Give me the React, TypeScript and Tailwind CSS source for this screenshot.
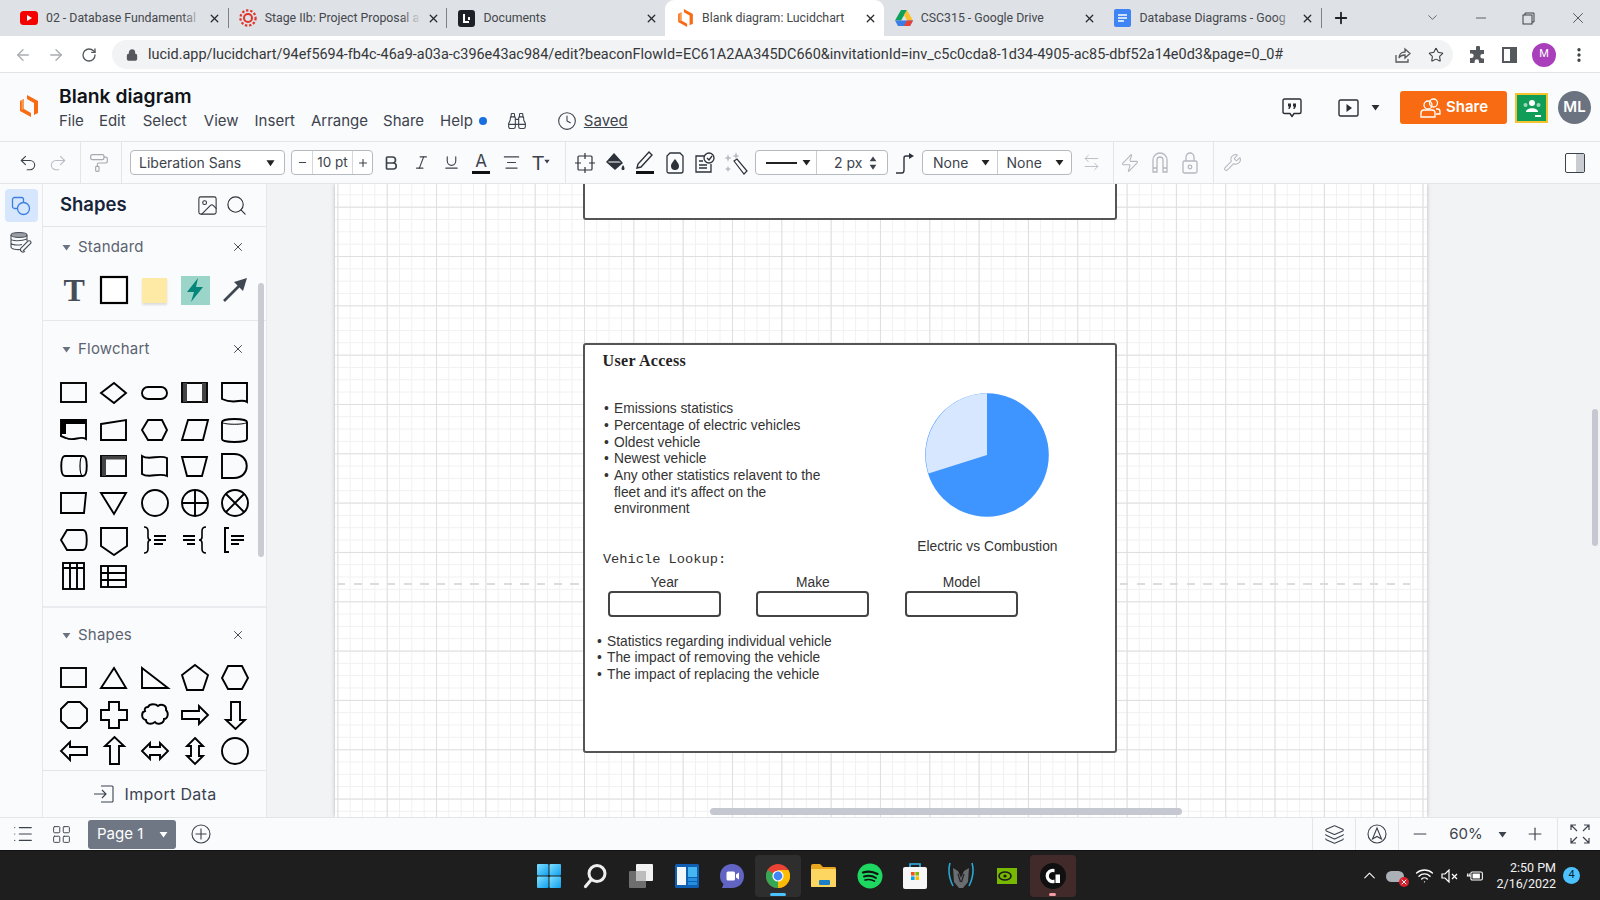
import React from 'react';
import {
  ArrowLeft, ArrowRight, RotateCw, Lock, Star, X, Plus, Minus, ChevronDown, ChevronUp, MoreVertical,
  Undo2, Redo2, PaintRoller, Bold, Italic, Underline, AlignCenter, Zap, Wrench, Search, Image as ImageIcon,
  List, LayoutGrid, Layers, Clock, Binoculars, Wifi, ArrowLeftRight,
} from 'lucide-react';

const Lucid = ({ className = '' }: { className?: string }) => (
  <svg viewBox="0 0 18 22" className={className}>
    <path d="M7 0 L18 6 V18 L14 20 V8 L7 4Z" fill="#f96b13" />
    <path d="M0 6 L4 4 V14 L11 18 V22 L0 16Z" fill="#f96b13" />
    <path d="M0 6 L4 4 V14 L1.6 15 V6.5Z" fill="#fb9b52" />
  </svg>
);

const Caret = ({ className = '' }: { className?: string }) => (
  <svg viewBox="0 0 10 8" className={className}><path d="M0.5 1h9L5 7.5z" fill="currentColor" /></svg>
);

function Tab({ icon, title, active, sep, fade }: { icon: React.ReactNode; title: string; active?: boolean; sep?: boolean; fade?: boolean }) {
  return (
    <div className={`relative flex h-full w-[218.7px] shrink-0 items-center pl-[11px] ${active ? 'rounded-t-[9px] bg-white' : ''}`}>
      <div className="flex w-[18px] shrink-0 items-center justify-center">{icon}</div>
      <div className="relative ml-[8px] w-[156px] overflow-hidden whitespace-nowrap text-[12.3px] text-[#44474b]">
        {title}
        {fade && <div className="absolute inset-y-0 right-0 w-[20px] bg-gradient-to-r from-transparent to-[#dee1e6]" />}
      </div>
      <X size={13} strokeWidth={2.4} className="ml-[6px] shrink-0 text-[#27292b]" />
      {sep && <div className="absolute right-[-1px] top-[8px] h-[20px] w-px bg-[#7d8085]" />}
    </div>
  );
}

const Ic = ({ children, w = 'w-[30px]' }: { children: React.ReactNode; w?: string }) => (
  <div className={`flex shrink-0 items-center justify-center ${w}`}>{children}</div>
);

const Sep = ({ className = '' }: { className?: string }) => <div className={`h-full w-px shrink-0 bg-[#e3e5e9] ${className}`} />;

function ShapeGrid({ children }: { children: React.ReactNode }) {
  return <div className="ml-[11px] grid w-[201.5px] grid-cols-5 auto-rows-[36.6px]">{children}</div>;
}

function Sh({ children }: { children: React.ReactNode }) {
  return (
    <div className="flex items-center justify-center">
      <svg width="32" height="32" viewBox="0 0 32 32" fill="none" stroke="#000" strokeWidth="1.9">{children}</svg>
    </div>
  );
}

function SectionHead({ title }: { title: string }) {
  return (
    <div className="flex h-[20px] items-center pl-[19px] pr-[21px]">
      <Caret className="h-[7px] w-[9px] text-[#6b7280]" />
      <span className="ml-[7px] flex-1 text-[15px] tracking-[0.2px] text-[#5c6370]">{title}</span>
      <X size={14} strokeWidth={1.6} className="text-[#3a3f47]" />
    </div>
  );
}

const flowchart = [
  <rect key="a" x="3" y="6" width="25" height="19" />,
  <path key="b" d="M16 6 L28 16 L16 26 L3 16Z" />,
  <rect key="c" x="3" y="10" width="25" height="12" rx="6" />,
  <g key="d"><rect x="3" y="6" width="25" height="19" /><rect x="4" y="6" width="4" height="19" fill="#444" stroke="none" /><rect x="23" y="6" width="4" height="19" fill="#444" stroke="none" /></g>,
  <path key="e" d="M3 6 H28 V25 C22 21 16 28 3 22Z" />,
  <g key="f"><path d="M3 6 H28 V25 C22 21 16 28 8 24 L3 22Z" /><path d="M3 6 H27 V10 H8 V20 L3 20Z" fill="#000" stroke="none" /></g>,
  <path key="g" d="M3 10 L28 6 V26 H3Z" />,
  <path key="h" d="M9 6 H23 L28 16 L23 26 H9 L3 16Z" />,
  <path key="i" d="M9 6 H29 L24 26 H3Z" />,
  <g key="j"><path d="M3 8 C3 4 28 4 28 8 V25 C28 29 3 29 3 25Z" /><path d="M3 8 C3 11 28 11 28 8" strokeWidth="1" /></g>,
  <g key="k"><path d="M7 6 H25 C30 6 30 26 25 26 H7 C2 26 2 6 7 6Z" /><path d="M25 6 C21 6 21 26 25 26" strokeWidth="1.2" /></g>,
  <g key="l"><rect x="3" y="6" width="25" height="20" /><rect x="4" y="6" width="4" height="20" fill="#444" stroke="none" /><rect x="4" y="6" width="24" height="3.5" fill="#444" stroke="none" /></g>,
  <path key="m" d="M3 6 C10 11 20 4 28 8 V26 C20 22 10 29 3 24Z" />,
  <path key="n" d="M3 7 H28 L23 26 H8Z" />,
  <path key="o" d="M3 4 H15 C32 4 32 28 15 28 H3Z" />,
  <path key="p" d="M3 6 H28 L26 26 H3Z" />,
  <path key="q" d="M3 6 H28 L16 27Z" />,
  <circle key="r" cx="16" cy="16" r="13" />,
  <g key="s"><circle cx="16" cy="16" r="13" /><path d="M3 16H29M16 3V29" /></g>,
  <g key="t"><circle cx="16" cy="16" r="13" /><path d="M7 7L25 25M25 7L7 25" /></g>,
  <path key="u" d="M9 6 H25 C30 6 30 26 25 26 H9 L3 16Z" />,
  <path key="v" d="M3 4 H29 V22 L16 31 L3 22Z" />,
  <g key="w"><path d="M5 3 Q9 3 9 7 V13 Q9 16 12 16 Q9 16 9 19 V25 Q9 29 5 29" strokeWidth="1.6" /><path d="M15 12H27M15 16H27M15 20H24" strokeWidth="2" /></g>,
  <g key="x"><path d="M27 3 Q23 3 23 7 V13 Q23 16 20 16 Q23 16 23 19 V25 Q23 29 27 29" strokeWidth="1.6" /><path d="M4 12H16M4 16H16M8 20H16" strokeWidth="2" /></g>,
  <g key="y"><path d="M10 4 H6 V28 H10" strokeWidth="2" /><path d="M12 12H25M12 16H25M12 20H20" strokeWidth="2" /></g>,
  <g key="z"><rect x="5" y="3" width="21" height="26" /><path d="M5 8H26M12 3V29M19 3V29" /></g>,
  <g key="aa"><rect x="3" y="6" width="25" height="21" /><path d="M3 13H28M3 20H28M10 6V27" /></g>,
];

const shapesList = [
  <rect key="a" x="3" y="6" width="25" height="19" />,
  <path key="b" d="M16 6 L28 26 H3Z" />,
  <path key="c" d="M3 6 L29 26 H3Z" />,
  <path key="d" d="M16 3 L29 13 L24 28 H8 L3 13Z" />,
  <path key="e" d="M9 4 H23 L29 16 L23 27 H9 L3 16Z" />,
  <path key="f" d="M10 3 H22 L29 10 V22 L22 29 H10 L3 22 V10Z" />,
  <path key="g" d="M11 3 H21 V11 H29 V21 H21 V29 H11 V21 H3 V11 H11Z" />,
  <path key="h" d="M9 8 C11 4 17 5 19 7 C23 4 28 7 27 11 C30 14 29 20 25 20 C25 25 18 26 16 23 C12 26 7 25 7 21 C2 20 2 13 6 12 C5 9 7 8 9 8Z" />,
  <path key="i" d="M3 12 H20 V7 L29 16 L20 25 V20 H3Z" />,
  <path key="j" d="M12 3 H21 V21 H26 L16.5 30 L7 21 H12Z" />,
  <path key="k" d="M29 12 H12 V7 L3 16 L12 25 V20 H29Z" />,
  <path key="l" d="M12 29 H21 V11 H26 L16.5 2 L7 11 H12Z" />,
  <path key="m" d="M3 16 L11 8 V12 H21 V8 L29 16 L21 24 V20 H11 V24Z" />,
  <path key="n" d="M16 3 L24 11 H20 V21 H24 L16 29 L8 21 H12 V11 H8Z" />,
  <circle key="o" cx="16" cy="16" r="13" />,
];

function Windows() {
  return (
    <svg width="26" height="26" viewBox="0 0 26 26">
      <defs>
        <linearGradient id="w1" x1="0" y1="0" x2="1" y2="1"><stop offset="0" stopColor="#7fe0ff" /><stop offset="1" stopColor="#0f9ff0" /></linearGradient>
      </defs>
      <rect x="1" y="1" width="11.5" height="11.5" rx="1" fill="url(#w1)" />
      <rect x="13.5" y="1" width="11.5" height="11.5" rx="1" fill="url(#w1)" />
      <rect x="1" y="13.5" width="11.5" height="11.5" rx="1" fill="url(#w1)" />
      <rect x="13.5" y="13.5" width="11.5" height="11.5" rx="1" fill="url(#w1)" />
    </svg>
  );
}

const taskIcons: React.ReactNode[] = [
  <Windows key="w" />,
  <svg key="s" width="26" height="26" viewBox="0 0 26 26" fill="none"><circle cx="15" cy="10.5" r="8" stroke="#eee" strokeWidth="3" /><path d="M9 17 L3.5 23.5" stroke="#eee" strokeWidth="3.2" strokeLinecap="round" /></svg>,
  <svg key="t" width="26" height="26" viewBox="0 0 26 26"><rect x="8" y="1" width="17" height="17" rx="1" fill="#f2f2f2" /><rect x="1" y="8" width="17" height="17" rx="1" fill="#777" fillOpacity="0.9" /><rect x="8" y="8" width="10" height="10" fill="#bdbdbd" /></svg>,
  <svg key="wd" width="26" height="26" viewBox="0 0 26 26"><rect x="1" y="1" width="24" height="24" rx="1.5" fill="#0f5fb4" /><rect x="3" y="4" width="9" height="18" fill="#f4f7fa" /><rect x="14" y="4" width="9" height="10" fill="#45b6f2" /><rect x="14" y="15" width="9" height="3" fill="#2590dd" /><rect x="14" y="19" width="9" height="3" fill="#2590dd" /></svg>,
  <svg key="c" width="26" height="26" viewBox="0 0 26 26"><path d="M13 1 C20 1 25 6 25 13 C25 20 20 25 13 25 H3 L4.5 21 C2 19 1 16 1 13 C1 6 6 1 13 1Z" fill="#6264c4" /><rect x="7.5" y="8.5" width="8.5" height="9" rx="1.5" fill="#fff" /><path d="M17 11.5 L20 9.5 V16.5 L17 14.5Z" fill="#fff" /></svg>,
  <svg key="ch" width="24" height="24" viewBox="0 0 24 24"><circle cx="12" cy="12" r="12" fill="#ea4335" /><path d="M12 12 L1.6 6 A12 12 0 0 0 12 24 L18 13.5Z" fill="#34a853" /><path d="M12 12 L12 24 A12 12 0 0 0 22.4 6 L12 6Z" fill="#fbbc04" /><circle cx="12" cy="12" r="5.6" fill="#fff" /><circle cx="12" cy="12" r="4.4" fill="#4285f4" /></svg>,
  <svg key="f" width="27" height="25" viewBox="0 0 27 25"><path d="M1 3 Q1 1 3 1 H10 L13 4 H25 Q26 4 26 6 V23 Q26 24 25 24 H2 Q1 24 1 23Z" fill="#e8a71e" /><rect x="1" y="6" width="25" height="18" rx="1" fill="#fdd662" /><rect x="9" y="17" width="11" height="5" rx="1" fill="#1c80c8" /></svg>,
  <svg key="sp" width="26" height="26" viewBox="0 0 26 26" fill="none"><circle cx="13" cy="13" r="12.5" fill="#1ed760" /><path d="M6 9.5 C11 8 16 8.5 20.5 11" stroke="#111" strokeWidth="2.2" strokeLinecap="round" /><path d="M7 13.5 C11 12.3 15.5 12.8 19 15" stroke="#111" strokeWidth="1.9" strokeLinecap="round" /><path d="M8 17 C11.5 16 15 16.5 17.5 18.2" stroke="#111" strokeWidth="1.6" strokeLinecap="round" /></svg>,
  <svg key="st" width="26" height="28" viewBox="0 0 26 28" fill="none"><path d="M8 6 V2 H18 V6" stroke="#33b4ee" strokeWidth="1.6" /><rect x="1" y="5" width="24" height="22" rx="2" fill="#f6f6f6" /><rect x="9" y="10" width="3.6" height="3.6" fill="#f25022" /><rect x="13.4" y="10" width="3.6" height="3.6" fill="#7fba00" /><rect x="9" y="14.4" width="3.6" height="3.6" fill="#00a4ef" /><rect x="13.4" y="14.4" width="3.6" height="3.6" fill="#ffb900" /></svg>,
  <svg key="pr" width="26" height="28" viewBox="0 0 26 28" fill="none"><path d="M2 1 C0 8 1 16 5 24 M24 1 C26 8 25 16 21 24" stroke="#2aa5cf" strokeWidth="1.6" /><path d="M5 6 L10 9 L13 16 L16 9 L21 6 L20 20 L15 26 H11 L6 20Z" fill="#6a6d71" /><path d="M10 12 L12.5 20 M16 12 L13.5 20" stroke="#222" strokeWidth="1.2" /></svg>,
  <svg key="nv" width="20" height="16" viewBox="0 0 20 16"><rect x="0" y="0" width="20" height="16" fill="#76b900" /><ellipse cx="8" cy="8" rx="6" ry="4" fill="none" stroke="#1c1c1c" strokeWidth="1.6" /><circle cx="8" cy="8" r="1.6" fill="#1c1c1c" /></svg>,
  <svg key="lg" width="26" height="26" viewBox="0 0 26 26" fill="none"><circle cx="13" cy="13" r="13" fill="#101010" /><path d="M14.5 6 A7.2 7.2 0 1 0 14.5 20 V16.6 A4 4 0 1 1 14.5 9.3Z" fill="#fff" /><path d="M15.5 11.5 H20 V20 H15.5Z" fill="#fff" /></svg>,
];

export default function App() {
  return (
    <div className="flex h-[900px] w-[1600px] flex-col overflow-hidden bg-white font-[Inter,sans-serif] text-[#1f2328]">
      {/* Browser tabs */}
      <div className="flex h-[36px] shrink-0 items-end bg-[#dee1e6] pl-[9px] font-[Roboto,sans-serif]">
        <Tab fade sep title="02 - Database Fundamental" icon={<svg width="18" height="14" viewBox="0 0 18 14"><rect width="18" height="14" rx="3.5" fill="#f40000" /><path d="M7 4 L12 7 L7 10Z" fill="#fff" /></svg>} />
        <Tab fade sep title="Stage IIb: Project Proposal a" icon={<svg width="18" height="18" viewBox="0 0 18 18" fill="none"><circle cx="9" cy="9" r="4" stroke="#e0352b" strokeWidth="2" /><circle cx="9" cy="9" r="7.6" stroke="#e0352b" strokeWidth="2.2" strokeDasharray="2.4 1.8" /></svg>} />
        <Tab title="Documents" icon={<svg width="17" height="17" viewBox="0 0 17 17"><rect width="17" height="17" rx="3" fill="#1d2026" /><path d="M6 4 V12 H11 M11 7 V10" stroke="#fff" strokeWidth="2" fill="none" /></svg>} />
        <Tab active title="Blank diagram: Lucidchart" icon={<Lucid className="h-[18px] w-[15px]" />} />
        <Tab title="CSC315 - Google Drive" icon={<svg width="18" height="16" viewBox="0 0 18 16"><path d="M6 0 H12 L6 10.5 H0Z" fill="#0fa05c" /><path d="M12 0 L18 10.5 H12 L9 5Z" fill="#fbc02d" /><path d="M0 10.5 H18 L15 16 H3Z" fill="#3b7de8" /><path d="M12 10.5 H18 L15 16 H9Z" fill="#e94235" /></svg>} />
        <Tab fade sep title="Database Diagrams - Goog" icon={<svg width="17" height="18" viewBox="0 0 17 18"><rect width="17" height="18" rx="2" fill="#3f84f4" /><path d="M4 6H13M4 9H13M4 12H10" stroke="#fff" strokeWidth="1.6" /></svg>} />
        <div className="ml-[11px] flex h-full items-center"><Plus size={18} strokeWidth={2.4} className="text-[#1f2124]" /></div>
        <div className="ml-[75px] flex h-full items-center gap-[33px] text-[#3c4043]">
          <ChevronDown size={15} strokeWidth={1.2} className="-translate-y-[1px]" />
          <Minus size={16} strokeWidth={1.2} />
          <svg width="13" height="13" viewBox="0 0 13 13" fill="none" stroke="#3c4043"><rect x="1" y="3" width="9" height="9" /><path d="M3 3V1H12V10H10" /></svg>
          <X size={18} strokeWidth={1.1} className="translate-x-[1px]" />
        </div>
      </div>

      {/* Address bar */}
      <div className="flex h-[37px] shrink-0 items-center border-b border-[#e3e4e7] bg-white pt-[1px] font-[Roboto,sans-serif]">
        <div className="flex w-[112px] shrink-0 items-center pl-[14px] text-[#a9acb0]">
          <ArrowLeft size={18} strokeWidth={1.8} />
          <ArrowRight size={18} strokeWidth={1.8} className="ml-[15px]" />
          <RotateCw size={16} strokeWidth={2} className="ml-[16px] text-[#55585c]" />
        </div>
        <div className="flex h-[29px] w-[1341px] shrink-0 items-center rounded-full bg-[#f1f3f4] pl-[14px] pr-[9px]">
          <Lock size={12} strokeWidth={2.6} fill="#55585c" className="shrink-0 text-[#55585c]" />
          <div className="ml-[10px] flex-1 whitespace-nowrap text-[14.45px] text-[#35373a]">lucid.app/lucidchart/94ef5694-fb4c-46a9-a03a-c396e43ac984/edit?beaconFlowId=EC61A2AA345DC660&amp;invitationId=inv_c5c0cda8-1d34-4905-ac85-dbf52a14e0d3&amp;page=0_0#</div>
          <svg width="18" height="18" viewBox="0 0 18 18" fill="none" stroke="#55585c" strokeWidth="1.3" className="shrink-0"><path d="M2 9 V16 H14 V13" /><path d="M5 12 C5 8 8 6 11 6 V3 L16 7.5 L11 12 V9 C8 9 6 10 5 12Z" /></svg>
          <Star size={16} strokeWidth={1.6} className="ml-[16px] shrink-0 text-[#3c3f42]" />
        </div>
        <div className="ml-[16px] flex items-center gap-[15px] text-[#55585c]">
          <svg width="18" height="18" viewBox="0 0 18 18" fill="#55585c"><path d="M7 1.5 a2 2 0 0 1 4 0 V4 H15 V8 h-1.5 a2.2 2.2 0 0 0 0 4.4 H15 V17 H10 v-1.5 a2.2 2.2 0 0 0 -4.4 0 V17 H1 V12 h1.5 a2.2 2.2 0 0 0 0 -4.4 H1 V4 H7Z" /></svg>
          <svg width="15" height="16" viewBox="0 0 15 16" fill="none"><rect x="1" y="1" width="13" height="14" stroke="#55585c" strokeWidth="2" /><rect x="8" y="1" width="6" height="14" fill="#55585c" /></svg>
          <div className="flex h-[24px] w-[24px] items-center justify-center rounded-full bg-[#a93fbb] text-[11px] text-white">M</div>
          <MoreVertical size={18} strokeWidth={2.4} className="-ml-[1px] text-[#3c4043]" />
        </div>
      </div>

      {/* Lucid header */}
      <div className="flex h-[68px] shrink-0 items-center bg-[#fafbfd]">
        <Lucid className="ml-[20px] mt-[-2px] h-[22px] w-[18px] shrink-0" />
        <div className="ml-[21px] flex flex-col pt-[1px]">
          <div className="text-[19.3px] font-semibold leading-[24px] text-[#111418]">Blank diagram</div>
          <div className="mt-[3px] flex h-[20px] items-center text-[15px] text-[#3d434c]">
            <span>File</span>
            <span className="ml-[15px]">Edit</span>
            <span className="ml-[17px]">Select</span>
            <span className="ml-[17px]">View</span>
            <span className="ml-[16px]">Insert</span>
            <span className="ml-[16px]">Arrange</span>
            <span className="ml-[15px]">Share</span>
            <span className="ml-[16px]">Help</span>
            <span className="ml-[6px] h-[8px] w-[8px] rounded-full bg-[#1a6fe0]" />
            <Binoculars size={20} strokeWidth={1.3} className="ml-[20px] text-[#3d434c]" />
            <Clock size={20} strokeWidth={1.3} className="ml-[30px] text-[#3d434c]" />
            <span className="ml-[7px] underline">Saved</span>
          </div>
        </div>
        <div className="ml-auto flex items-center pt-[1px]">
          <svg width="20" height="20" viewBox="0 0 20 20" fill="none"><path d="M2.5 1 H17.5 Q19 1 19 2.5 V14 Q19 15.5 17.5 15.5 H12 L10 18.5 L8 15.5 H2.5 Q1 15.5 1 14 V2.5 Q1 1 2.5 1Z" stroke="#2a2e34" strokeWidth="1.4" strokeLinejoin="round" /><path d="M6 5.5 H9 V8.5 L7.5 11 H6.3 L7 8.5 H6Z M11 5.5 H14 V8.5 L12.5 11 H11.3 L12 8.5 H11Z" fill="#2a2e34" /></svg>
          <svg width="21" height="18" viewBox="0 0 21 18" fill="none" className="ml-[36px]"><rect x="1" y="1" width="19" height="16" rx="1.5" stroke="#2a2e34" strokeWidth="1.4" /><path d="M8.5 5 L14 9 L8.5 13Z" fill="#2a2e34" /></svg>
          <Caret className="ml-[12px] h-[7px] w-[9px] text-[#2a2e34]" />
          <div className="ml-[20px] flex h-[33px] w-[107px] items-center justify-center gap-[5px] rounded-[3px] bg-[#f96b13] text-[15px] font-semibold text-white">
            <svg width="22" height="22" viewBox="0 0 22 22" fill="none" stroke="#fff" strokeWidth="1.3"><circle cx="9" cy="8" r="4" /><circle cx="14.5" cy="6" r="4" /><path d="M2 20 V16 Q2 13 5 13 H13 Q16 13 16 16 V20Z" /><path d="M17 12 H19 Q21 12 21 15 V17 H17" /></svg>
            Share
          </div>
          <div className="ml-[8px] flex h-[30px] w-[33px] items-center justify-center border-[2px] border-[#f4c430] bg-[#0f9d58]">
            <svg width="24" height="22" viewBox="0 0 24 22" fill="#fff"><circle cx="12" cy="6" r="3" /><circle cx="5.5" cy="8" r="2" fillOpacity="0.6" /><circle cx="18.5" cy="8" r="2" fillOpacity="0.6" /><path d="M6 15 C6 10 18 10 18 15Z" /><rect x="15" y="18" width="6" height="2" /></svg>
          </div>
          <div className="ml-[10px] mr-[9px] flex h-[33px] w-[33px] items-center justify-center rounded-full bg-[#6b7280] text-[15px] font-semibold text-white">ML</div>
        </div>
      </div>

      {/* Toolbar */}
      <div className="flex h-[43px] shrink-0 items-center border-y border-[#e3e5e9] bg-[#fafbfd] pl-[13px] text-[#3d434c]">
        <Ic><Undo2 size={20} strokeWidth={1.3} /></Ic>
        <Ic><Redo2 size={20} strokeWidth={1.3} className="text-[#b9bdc4]" /></Ic>
        <Sep className="ml-[7px]" />
        <Ic w="w-[36px]"><PaintRoller size={20} strokeWidth={1.4} className="text-[#a5a9b0]" /></Ic>
        <Sep className="ml-[4px]" />
        <div className="ml-[8px] flex h-[25px] w-[155px] shrink-0 items-center rounded-[4px] border border-[#b5b9c0] bg-white pl-[8px] pr-[9px] text-[14px]">
          <span className="flex-1">Liberation Sans</span>
          <Caret className="h-[8px] w-[9px] text-[#222]" />
        </div>
        <div className="ml-[6px] flex h-[25px] w-[82px] shrink-0 items-center rounded-[4px] border border-[#b5b9c0] bg-white text-[14px]">
          <span className="flex h-full w-[21px] items-center justify-center border-r border-[#d5d7db]"><Minus size={11} strokeWidth={2.2} /></span>
          <span className="flex-1 text-center text-[13.5px]">10 pt</span>
          <span className="flex h-full w-[20px] items-center justify-center border-l border-[#d5d7db]"><Plus size={12} strokeWidth={2.2} /></span>
        </div>
        <Ic w="ml-[3px] w-[30px]"><Bold size={18} strokeWidth={2.2} /></Ic>
        <Ic><Italic size={17} strokeWidth={1.6} /></Ic>
        <Ic><Underline size={17} strokeWidth={1.6} /></Ic>
        <Ic>
          <div className="flex flex-col items-center">
            <span className="text-[17px] leading-[19px]">A</span>
            <span className="h-[3px] w-[18px] bg-[#111]" />
          </div>
        </Ic>
        <Ic><AlignCenter size={19} strokeWidth={1.5} /></Ic>
        <Ic>
          <span className="flex items-start"><span className="font-[Liberation_Sans,sans-serif] text-[20px] leading-none">T</span><Caret className="mt-[6px] h-[5px] w-[6px]" /></span>
        </Ic>
        <Sep className="ml-[9px]" />
        <Ic w="ml-[4px] w-[30px]">
          <svg width="20" height="22" viewBox="0 0 20 22" fill="none" stroke="#2d323a" strokeWidth="1.2"><rect x="3" y="4" width="14" height="14" rx="1" /><path d="M10 1V7M10 15V21M0 11H6M14 11H20" /></svg>
        </Ic>
        <Ic>
          <svg width="22" height="22" viewBox="0 0 22 22" fill="none"><path d="M10 2 L18 11 L11 17 L3 10Z" fill="#2d323a" /><path d="M3 10 H18" stroke="#fff" strokeWidth="1" /><path d="M10 2 L18 11 L11 17 L3 10Z" stroke="#2d323a" strokeWidth="1.4" /><path d="M19 13 C21 16 21 18 19 18 C17 18 17 16 19 13Z" fill="#2d323a" /></svg>
        </Ic>
        <Ic>
          <svg width="22" height="25" viewBox="0 0 22 25" fill="none" stroke="#2d323a" strokeWidth="1.4"><path d="M3 18 L4 14 L15 2 L18 5 L7 17Z" /><rect x="2" y="21" width="18" height="3" fill="#111" stroke="none" /></svg>
        </Ic>
        <Ic>
          <svg width="18" height="22" viewBox="0 0 18 22" fill="none"><path d="M4 1 H14 L17 4 V19 Q17 21 15 21 H3 Q1 21 1 19 V4Z" stroke="#2d323a" strokeWidth="1.3" /><path d="M9 7 C12 11 13 12 13 14 A4 4 0 0 1 5 14 C5 12 6 11 9 7Z" fill="#2d323a" /></svg>
        </Ic>
        <Ic w="w-[30.5px]">
          <svg width="22" height="22" viewBox="0 0 22 22" fill="none" stroke="#2d323a" strokeWidth="1.3"><path d="M14 4 H2 V20 H17 V12" /><path d="M5 9H9M5 13H13M5 16H13" /><circle cx="15" cy="6" r="5" fill="#fafbfd" /><path d="M13 6 L15 8 L18 4" /></svg>
        </Ic>
        <Ic w="w-[30.5px]">
          <svg width="24" height="24" viewBox="0 0 24 24" fill="none" stroke="#2d323a" strokeWidth="1.2"><path d="M10 10 L13 8 L23 20 L20 23Z" /><path d="M4 3 L5 6 L8 7 L5 8 L4 11 L3 8 L0.5 7 L3 6Z" fill="#b9bdc4" stroke="none" /><path d="M12 1 L13 4 L15.5 5 L13 6 L12 8 L11 6 L8.5 5 L11 4Z" fill="#b9bdc4" stroke="none" /><path d="M4 15 L5 17 L7 18 L5 19 L4 21 L3 19 L1 18 L3 17Z" fill="#b9bdc4" stroke="none" /></svg>
        </Ic>
        <div className="ml-[4px] flex h-[25px] w-[133px] shrink-0 items-center rounded-[4px] border border-[#b5b9c0] bg-white text-[14px]">
          <div className="flex h-full w-[61px] items-center border-r border-[#c8cbd0] pl-[10px] pr-[5px]">
            <span className="h-[2px] flex-1 bg-[#222]" />
            <Caret className="ml-[5px] h-[7px] w-[9px] text-[#222]" />
          </div>
          <span className="ml-[17px]">2 px</span>
          <span className="ml-[7px] flex flex-col gap-[2px]"><Caret className="h-[6px] w-[8px] rotate-180" /><Caret className="h-[6px] w-[8px]" /></span>
        </div>
        <Ic w="ml-[2px] w-[30px]">
          <svg width="20" height="24" viewBox="0 0 20 24" fill="none" stroke="#2d323a" strokeWidth="1.4"><path d="M1 22 H7 Q9 22 9 19 V7 Q9 5 11 5 H15" /><path d="M14 2 L19 5 L14 8Z" fill="#2d323a" stroke="none" /></svg>
        </Ic>
        <div className="ml-[2px] flex h-[25px] w-[150px] shrink-0 items-center rounded-[4px] border border-[#b5b9c0] bg-white text-[14px]">
          <div className="flex h-full w-[75px] items-center justify-between border-r border-[#c8cbd0] pl-[10px] pr-[7px]"><span>None</span><Caret className="h-[7px] w-[9px] text-[#222]" /></div>
          <div className="flex h-full w-[74px] items-center justify-between pl-[9px] pr-[7px]"><span>None</span><Caret className="h-[7px] w-[9px] text-[#222]" /></div>
        </div>
        <Ic w="ml-[4px] w-[30px]"><ArrowLeftRight size={19} strokeWidth={1.2} className="text-[#b9bdc4]" /></Ic>
        <Sep className="ml-[7px]" />
        <Ic w="ml-[1px] w-[30px]"><Zap size={20} strokeWidth={1.3} className="text-[#b4b8bf]" /></Ic>
        <Ic>
          <svg width="16" height="21" viewBox="0 0 16 21" fill="none" stroke="#b4b8bf" strokeWidth="1.3"><path d="M1 20 V8 A7 7 0 0 1 15 8 V20 H11 V8 A3 3 0 0 0 5 8 V20Z M1 16 H5 M11 16 H15" /></svg>
        </Ic>
        <Ic>
          <svg width="16" height="22" viewBox="0 0 16 22" fill="none" stroke="#b4b8bf" strokeWidth="1.3"><path d="M4 9 V5 A4 4 0 0 1 12 5 V9" /><rect x="1" y="9" width="14" height="12" rx="1.5" /><circle cx="8" cy="15" r="1.8" /></svg>
        </Ic>
        <Sep className="ml-[8px]" />
        <Ic w="ml-[3px] w-[30px]"><Wrench size={19} strokeWidth={1.3} className="text-[#b4b8bf]" /></Ic>
        <div className="ml-auto mr-[15px] flex h-[20px] w-[20px] items-center justify-end rounded-[2px] border-[1.5px] border-[#3d434c] bg-white">
          <span className="h-full w-[8px] bg-[#c9ccd3]" />
        </div>
      </div>

      {/* Main */}
      <div className="flex min-h-0 flex-1">
        <div className="flex w-[43px] shrink-0 flex-col items-center border-r border-[#e6e8eb] bg-[#fafbfd] pt-[5px]">
          <div className="flex h-[33px] w-[33px] items-center justify-center rounded-[4px] bg-[#d6e7fd]">
            <svg width="20" height="20" viewBox="0 0 20 20" fill="none" stroke="#3d7fe0" strokeWidth="1.3"><rect x="1.5" y="1.5" width="11" height="11" rx="2" /><circle cx="12.5" cy="12.5" r="6" fill="#d6e7fd" /></svg>
          </div>
          <svg width="24" height="22" viewBox="0 0 24 22" fill="none" stroke="#4a5058" strokeWidth="1.1" className="mt-[9px]"><ellipse cx="10" cy="4" rx="8" ry="2.5" fill="#9a9ea5" /><path d="M2 4 V16 C2 18 8 19 11 18.5 M2 8 C2 10 12 10.5 18 8 M2 12 C2 14 8 14.5 13 13.5 M18 4 V10" /><path d="M14 20 L22 12 A2 2 0 0 0 19 10 L12 17 A2 2 0 0 0 16 20" /></svg>
        </div>
        <div className="flex w-[224px] shrink-0 flex-col border-r border-[#e6e8eb] bg-[#fafbfd]">
          <div className="flex h-[43px] shrink-0 items-center border-b border-[#e3e5e9] pl-[17px] pr-[18px]">
            <span className="flex-1 text-[18.5px] font-semibold text-[#16243a]">Shapes</span>
            <ImageIcon size={23} strokeWidth={1.1} className="text-[#2d323a]" />
            <Search size={23} strokeWidth={1.2} className="ml-[6px] text-[#2d323a]" />
          </div>
          <div className="relative min-h-0 flex-1 overflow-hidden">
            <div className="flex h-[94px] flex-col border-b border-[#e6e8eb] pt-[10px]">
              <SectionHead title="Standard" />
              <div className="ml-[11px] mt-[17px] grid w-[201.5px] grid-cols-5">
                <div className="flex h-[32px] items-center justify-center font-[Liberation_Serif,serif] text-[32px] font-bold leading-none text-[#454d59]">T</div>
                <Sh><rect x="3" y="3" width="26" height="26" strokeWidth="2.2" fill="#fff" /></Sh>
                <div className="flex items-center justify-center"><div className="h-[25px] w-[25px] bg-[#feeaa4] shadow-[0_2px_2px_rgba(0,0,0,0.12)]" /></div>
                <div className="flex items-center justify-center">
                  <div className="flex h-[29px] w-[29px] items-center justify-center bg-[#9bd5c9]">
                    <svg width="20" height="26" viewBox="0 0 20 26"><path d="M13 1 L2 15 H9 L6 25 L18 10 H11Z" fill="#06857a" /></svg>
                  </div>
                </div>
                <div className="flex items-center justify-center">
                  <svg width="26" height="26" viewBox="0 0 26 26" fill="none"><path d="M2 24 L19 7" stroke="#3f4753" strokeWidth="2.6" /><path d="M25 1 L21 14 L12 5Z" fill="#3f4753" /></svg>
                </div>
              </div>
            </div>
            <div className="flex h-[287px] flex-col border-b-[2px] border-[#e9ebee] pt-[18px]">
              <SectionHead title="Flowchart" />
              <div className="mt-[16px]"><ShapeGrid>{flowchart.map((s, i) => <Sh key={i}>{s}</Sh>)}</ShapeGrid></div>
            </div>
            <div className="flex flex-col pt-[17px]">
              <SectionHead title="Shapes" />
              <div className="mt-[15px]"><ShapeGrid>{shapesList.map((s, i) => <Sh key={i}>{s}</Sh>)}</ShapeGrid></div>
            </div>
            <div className="absolute right-[2px] top-[56px] h-[274px] w-[6px] rounded-full bg-[#c9ccd3]" />
          </div>
          <div className="flex h-[47px] shrink-0 items-center justify-center border-t border-[#e3e5e9] bg-[#fafbfd] text-[16px] tracking-[0.3px] text-[#3a4250]">
            <svg width="21" height="18" viewBox="0 0 21 18" fill="none" stroke="#3a4250" strokeWidth="1.1"><path d="M1 9 H13 M9 5 L13 9 L9 13" /><path d="M8 1 H19 Q20 1 20 2 V16 Q20 17 19 17 H8" /></svg>
            <span className="ml-[11px]">Import Data</span>
          </div>
        </div>

        {/* Canvas */}
        <div className="relative min-w-0 flex-1 overflow-hidden bg-[#f2f3f5] pl-[68px]">
          <div className="relative h-full w-[1092px] bg-white bg-[linear-gradient(to_right,#dfdfdf_1px,transparent_1px),linear-gradient(to_bottom,#dfdfdf_1px,transparent_1px),linear-gradient(to_right,#f0f0f0_1px,transparent_1px),linear-gradient(to_bottom,#f0f0f0_1px,transparent_1px)] bg-size-[49.33px_49.33px,49.33px_49.33px,12.33px_12.33px,12.33px_12.33px] bg-position-[2.4px_22.7px] shadow-[0_0_4px_rgba(0,0,0,0.25)]">
            <div className="absolute left-[2px] right-[17px] top-[399px] h-[2px] bg-[repeating-linear-gradient(to_right,#dcdcdc_0,#dcdcdc_8.3px,transparent_8.3px,transparent_16.66px)]" />
            <div className="absolute left-[248px] top-[-100px] h-[136px] w-[534px] rounded-[3px] border-[2px] border-[#555] bg-white" />
            <div className="absolute left-[248px] top-[159px] h-[410px] w-[534px] rounded-[3px] border-[2px] border-[#555] bg-white text-[#333] font-[Liberation_Sans,Arial,sans-serif]">
              <div className="absolute left-[17.6px] top-[6px] font-[Liberation_Serif,serif] text-[16px] font-bold leading-[20px] tracking-[0.3px] text-[#222]">User Access</div>
              <ul className="absolute left-[19px] top-[56.4px] text-[13.75px] leading-[16.67px]">
                {['Emissions statistics', 'Percentage of electric vehicles', 'Oldest vehicle', 'Newest vehicle'].map((t) => (
                  <li key={t} className="flex"><span className="w-[10px] shrink-0">•</span>{t}</li>
                ))}
                <li className="flex"><span className="w-[10px] shrink-0">•</span><span>Any other statistics relavent to the<br />fleet and it's affect on the<br />environment</span></li>
              </ul>
              <svg width="124" height="124" viewBox="0 0 124 124" className="absolute left-[340px] top-[47.7px]">
                <circle cx="62" cy="62" r="61.8" fill="#3e95ff" />
                <path d="M62 62 L62 0.2 A61.8 61.8 0 0 0 3.5 80.6 Z" fill="#d6e7ff" />
              </svg>
              <div className="absolute left-[302.4px] top-[194.4px] w-[200px] text-center text-[13.8px] leading-[16.67px]">Electric vs Combustion</div>
              <div className="absolute left-[17.9px] top-[206.3px] whitespace-pre font-[Liberation_Mono,monospace] text-[13.7px] leading-[18px]">Vehicle Lookup:</div>
              {[
                { t: 'Year', c: 'left-[23px]' },
                { t: 'Make', c: 'left-[171.4px]' },
                { t: 'Model', c: 'left-[320px]' },
              ].map((f) => (
                <div key={f.t} className={`absolute top-[229.5px] w-[113px] ${f.c}`}>
                  <div className="text-center text-[13.8px] leading-[16px]">{f.t}</div>
                  <div className="h-[26px] rounded-[4px] border-[2px] border-[#444] bg-white" />
                </div>
              ))}
              <ul className="absolute left-[12px] top-[288.5px] text-[13.75px] leading-[16.67px]">
                {['Statistics regarding individual vehicle', 'The impact of removing the vehicle', 'The impact of replacing the vehicle'].map((t) => (
                  <li key={t} className="flex"><span className="w-[10px] shrink-0">•</span>{t}</li>
                ))}
              </ul>
            </div>
            <div className="absolute bottom-[2px] left-[375px] h-[7px] w-[472px] rounded-full bg-[#c5c8d0]" />
          </div>
          <div className="absolute right-[2px] top-[225px] h-[137px] w-[6px] rounded-full bg-[#c5c8d0]" />
        </div>
      </div>

      {/* Bottom bar */}
      <div className="flex h-[33px] shrink-0 items-center border-t border-[#e3e5e9] bg-[#fafbfd] text-[#3d434c]">
        <Ic w="ml-[8px] w-[30px]"><List size={22} strokeWidth={1.3} /></Ic>
        <Ic w="ml-[8px] w-[30px]"><LayoutGrid size={21} strokeWidth={1.1} /></Ic>
        <div className="ml-[12px] flex h-[29px] w-[88px] items-center rounded-[3px] bg-[#6f7785] pl-[9px] text-[15px] text-white">
          <span className="flex-1">Page 1</span>
          <Caret className="mr-[8px] h-[7px] w-[9px]" />
        </div>
        <svg width="20" height="20" viewBox="0 0 20 20" fill="none" stroke="#3d434c" strokeWidth="1.1" className="ml-[15px]"><circle cx="10" cy="10" r="9" /><path d="M10 4.5V15.5M4.5 10H15.5" /></svg>
        <div className="ml-auto flex h-full items-center">
          <Sep />
          <Ic w="w-[42px]"><Layers size={21} strokeWidth={1.2} /></Ic>
          <Sep />
          <Ic w="w-[42px]">
            <svg width="20" height="20" viewBox="0 0 20 20" fill="none" stroke="#3d434c" strokeWidth="1.1"><circle cx="10" cy="10" r="9" /><path d="M5.5 15 L10 4 L14.5 15 L10 12.5Z" /></svg>
          </Ic>
          <Sep />
          <Ic w="ml-[5px] w-[32px]"><Minus size={20} strokeWidth={1.4} /></Ic>
          <span className="ml-[12px] w-[36px] text-center text-[15px] text-[#3d434c]">60%</span>
          <Caret className="ml-[14px] h-[7px] w-[9px]" />
          <Ic w="ml-[6px] w-[44px]"><Plus size={20} strokeWidth={1.4} /></Ic>
          <Sep />
          <Ic w="ml-[6px] w-[32px]">
            <svg width="20" height="20" viewBox="0 0 20 20" fill="none" stroke="#3d434c" strokeWidth="1.2"><path d="M1 1 L7 7 M1 6 V1 H6 M19 1 L13 7 M14 1 H19 V6 M1 19 L7 13 M1 14 V19 H6 M19 19 L13 13 M14 19 H19 V14" /></svg>
          </Ic>
          <div className="w-[4px]" />
        </div>
      </div>

      {/* Taskbar */}
      <div className="relative flex h-[50px] shrink-0 items-center justify-center border-t border-[#111] bg-[#1e1e1e] pl-[2px] font-[Roboto,sans-serif]">
        {taskIcons.map((ic, i) => (
          <div key={i} className={`relative flex h-[42px] w-[45.8px] items-center justify-center rounded-[4px] ${i === 5 ? 'bg-[#2e2e2e]' : i === 11 ? 'bg-[#432a2a]' : ''}`}>
            {ic}
            {i === 5 && <span className="absolute bottom-[1px] h-[3px] w-[16px] rounded-full bg-[#4cc2ff]" />}
            {i === 11 && <span className="absolute bottom-[1px] h-[3px] w-[7px] rounded-full bg-[#f29ca3]" />}
          </div>
        ))}
        <div className="absolute right-[20px] top-0 flex h-full items-center text-white">
          <ChevronUp size={19} strokeWidth={1.3} className="mr-[7px]" />
          <div className="relative mr-[9px] h-[14px] w-[20px]">
            <div className="absolute left-0 top-[2px] h-[11px] w-[18px] rounded-full bg-[#aab0b6]" />
            <div className="absolute bottom-[-4px] right-[-3px] flex h-[10px] w-[10px] items-center justify-center rounded-full bg-[#d6202b]"><X size={8} strokeWidth={3} /></div>
          </div>
          <Wifi size={19} strokeWidth={1.7} className="mr-[6px]" />
          <svg width="18" height="14" viewBox="0 0 18 14" fill="none" stroke="#fff" strokeWidth="1.2" className="ml-[1px]"><path d="M1 5 H4 L8 1 V13 L4 9 H1Z" /><path d="M11 5 L16 10 M16 5 L11 10" /></svg>
          <svg width="18" height="14" viewBox="0 0 22 14" fill="none" stroke="#fff" strokeWidth="1.3" className="ml-[7px]"><rect x="6" y="2" width="14" height="10" rx="1.5" /><rect x="8" y="4" width="9" height="6" fill="#fff" stroke="none" /><path d="M1 7 H6 M2 4 V7 M4 4 V7" /></svg>
          <div className="ml-[10px] flex w-[62px] flex-col items-end text-[12.5px] leading-[16px] text-[#f2f2f2]">
            <span>2:50 PM</span>
            <span>2/16/2022</span>
          </div>
          <div className="ml-[7px] flex h-[17px] w-[17px] items-center justify-center rounded-full bg-[#4cc2ff] text-[11px] text-[#123]">4</div>
        </div>
      </div>
    </div>
  );
}
